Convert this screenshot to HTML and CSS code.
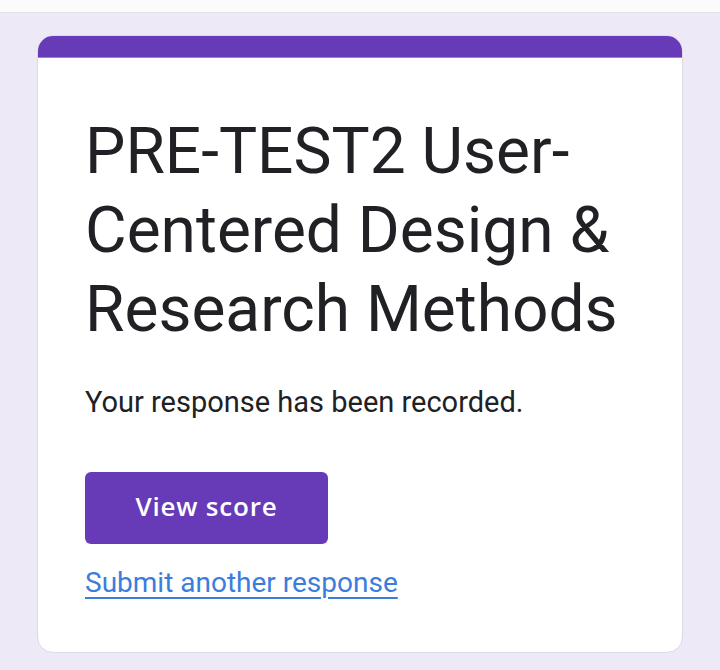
FILE: index.html
```html
<!DOCTYPE html>
<html>
<head>
<meta charset="utf-8">
<link rel="stylesheet" href="styles.css">
</head>
<body>
<div class="topbar"></div>
<main class="page">
  <section class="card">
    <div class="accent"></div>
    <div class="content">
      <h1 class="title">PRE-TEST2 User-Centered Design &amp; Research Methods</h1>
      <p class="message">Your response has been recorded.</p>
      <button class="btn">View score</button>
      <a class="link" href="#">Submit another response</a>
    </div>
  </section>
</main>
</body>
</html>
```
FILE: styles.css
```css
html, body {
  margin: 0;
  padding: 0;
}
body {
  width: 720px;
  height: 670px;
  background: #ede9f7;
  font-family: Roboto, "Noto Sans", sans-serif;
  overflow: hidden;
}
.topbar {
  height: 12px;
  background: #fbfbfc;
  border-bottom: 1px solid #e4e2ea;
}
.page {
  padding: 22px 37px 0 37px;
}
.card {
  height: 618px;
  background: #ffffff;
  border-radius: 16px;
  border: 1px solid #dcd8e4;
  box-sizing: border-box;
  overflow: hidden;
}
.accent {
  height: 21px;
  background: #673ab7;
  border-bottom: 1px solid #9c7fd6;
}
.content {
  padding: 54px 20px 0 47px;
  display: flex;
  flex-direction: column;
  align-items: flex-start;
}
.title {
  margin: 0;
  font-weight: 400;
  font-size: 64px;
  line-height: 79px;
  color: #202124;
  max-width: 560px;
}
.message {
  margin: 36px 0 0 0;
  font-size: 29px;
  line-height: 34px;
  color: #202124;
}
.btn {
  margin-top: 53px;
  width: 243px;
  height: 72px;
  padding: 0 0 5px 0;
  border: none;
  border-radius: 6px;
  background: #673ab7;
  color: #ffffff;
  font-family: "Open Sans", Roboto, sans-serif;
  font-weight: 600;
  font-size: 26px;
  letter-spacing: 0.8px;
}
.link {
  margin-top: 22px;
  font-size: 28px;
  line-height: 34px;
  color: #3b7ddd;
  text-decoration: underline;
  text-decoration-thickness: 2px;
  text-underline-offset: 5px;
}
```
